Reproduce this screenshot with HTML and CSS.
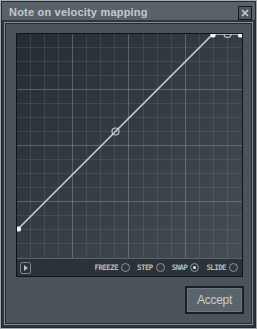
FILE: index.html
```html
<!DOCTYPE html>
<html>
<head>
    <title>Note on velocity mapping</title>
    <link rel="stylesheet" href="styles.css">
</head>
<body>
    <div class="window">
        <div class="titlebar">
            <span class="title">Note on velocity mapping</span>
            <div class="close">
                <svg width="12" height="12" viewBox="0 0 12 12">
                    <path d="M3 3 L9 9 M9 3 L3 9" stroke="#c9ced1" stroke-width="1.6" fill="none"/>
                </svg>
            </div>
        </div>
        <div class="content">
            <div class="editor">
                <svg class="graph" width="225" height="224" viewBox="0 0 225 224">
                    <defs>
                        <linearGradient id="bg" x1="0" y1="0" x2="1" y2="1">
                            <stop offset="0" stop-color="#252c31"/>
                            <stop offset="0.5" stop-color="#353d43"/>
                            <stop offset="1" stop-color="#454e55"/>
                        </linearGradient>
                    </defs>
                    <rect width="225" height="224" fill="url(#bg)"/>
                    <g id="grid"></g>
                    <polyline points="1,195 196,0 225,0" fill="none" stroke="#c3c8cc" stroke-width="1.7"/>
                    <circle cx="98.5" cy="97.5" r="3.5" fill="none" stroke="#c3c8cc" stroke-width="1.2"/>
                    <circle cx="210.5" cy="0" r="3.5" fill="none" stroke="#c3c8cc" stroke-width="1.2"/>
                    <circle cx="1.5" cy="195" r="2.6" fill="#f2f4f5"/>
                    <circle cx="196" cy="1" r="2.6" fill="#f2f4f5"/>
                    <circle cx="223.5" cy="1" r="2.6" fill="#f2f4f5"/>
                </svg>
                <div class="toolbar">
                    <div class="play">
                        <svg width="9" height="10" viewBox="0 0 9 10">
                            <path d="M3 2 L7 5 L3 8 Z" fill="#b9bfc3"/>
                        </svg>
                    </div>
                    <div class="options">
                        <span class="opt">FREEZE <i class="radio"></i></span>
                        <span class="opt">STEP <i class="radio"></i></span>
                        <span class="opt">SNAP <i class="radio checked"></i></span>
                        <span class="opt">SLIDE <i class="radio"></i></span>
                    </div>
                </div>
            </div>
            <div class="actions">
                <button class="accept">Accept</button>
            </div>
        </div>
    </div>

    <script>
        // Draw the 16x16 grid, a brighter line every 4 cells
        var grid = document.getElementById('grid');
        var ns = 'http://www.w3.org/2000/svg';
        for (var i = 1; i < 16; i++) {
            var major = i % 4 == 0;
            var color = major ? 'rgba(150,165,175,0.42)' : 'rgba(130,145,155,0.2)';
            var x = Math.round(i * 14.06) - 0.5;
            var y = Math.round(i * 14) - 0.5;

            var v = document.createElementNS(ns, 'line');
            v.setAttribute('x1', x); v.setAttribute('x2', x);
            v.setAttribute('y1', 0); v.setAttribute('y2', 224);
            v.setAttribute('stroke', color);
            grid.appendChild(v);

            var h = document.createElementNS(ns, 'line');
            h.setAttribute('x1', 0); h.setAttribute('x2', 225);
            h.setAttribute('y1', y); h.setAttribute('y2', y);
            h.setAttribute('stroke', color);
            grid.appendChild(h);
        }
    </script>
</body>
</html>
```

FILE: styles.css
```css
body {
    margin: 0;
    font-family: "Liberation Sans", Arial, sans-serif;
    background-color: #30373c;
}

.window {
    box-sizing: border-box;
    width: 257px;
    height: 329px;
    padding: 1px;
    border: 1px solid #a3a9ad;
    box-shadow: inset 0 0 0 1px #23292d;
    background-color: #2f363b;
}

.titlebar {
    display: flex;
    align-items: center;
    justify-content: space-between;
    height: 18px;
    padding: 0 3px 0 7px;
    background-color: #5a6269;
}

.title {
    color: #c3c9cc;
    font-size: 11px;
    font-weight: bold;
    letter-spacing: 0.2px;
    padding-top: 1px;
}

.close {
    box-sizing: border-box;
    width: 14px;
    height: 14px;
    margin-top: 3px;
    border: 1px solid #15191c;
    background-color: #4f575e;
    display: flex;
    align-items: center;
    justify-content: center;
}

.content {
    margin: 2px 2px 0 2px;
    padding: 10px 9px 10px 11px;
    border: 1px solid #868d92;
    box-shadow: inset 0 0 0 1px #262c30;
    background-color: #4b545b;
}

.editor {
    width: 225px;
    border: 1px solid #101417;
}

.graph {
    display: block;
}

.toolbar {
    display: flex;
    align-items: center;
    justify-content: space-between;
    height: 17px;
    padding: 0 4px 0 3px;
    border-top: 1px solid #5a636a;
    background-color: #2c3338;
}

.play {
    box-sizing: border-box;
    width: 11px;
    height: 12px;
    border: 1px solid #7a8287;
    border-radius: 2px;
    display: flex;
    align-items: center;
    justify-content: center;
}

.options {
    display: flex;
    align-items: center;
    gap: 7px;
}

.opt {
    display: flex;
    align-items: center;
    gap: 3px;
    color: #b4babe;
    font-family: "DejaVu Sans Mono", monospace;
    font-size: 7.5px;
    font-weight: bold;
    letter-spacing: -0.6px;
}

.radio {
    box-sizing: border-box;
    width: 9px;
    height: 9px;
    border: 1px solid #8c9499;
    border-radius: 50%;
    background-color: #30373c;
    display: flex;
    align-items: center;
    justify-content: center;
}

.radio.checked::after {
    content: "";
    width: 3px;
    height: 3px;
    border-radius: 50%;
    background-color: #e6e9eb;
}

.actions {
    display: flex;
    justify-content: flex-end;
    margin-top: 9px;
    margin-right: -1px;
}

.accept {
    box-sizing: border-box;
    width: 59px;
    height: 28px;
    border: 2px solid #1b2024;
    box-shadow: inset 0 0 0 1px #6d767d;
    background-color: #5b646b;
    color: #c8cdd0;
    font-family: "Liberation Sans", Arial, sans-serif;
    font-size: 12px;
    letter-spacing: -0.3px;
    padding: 0;
}
```
